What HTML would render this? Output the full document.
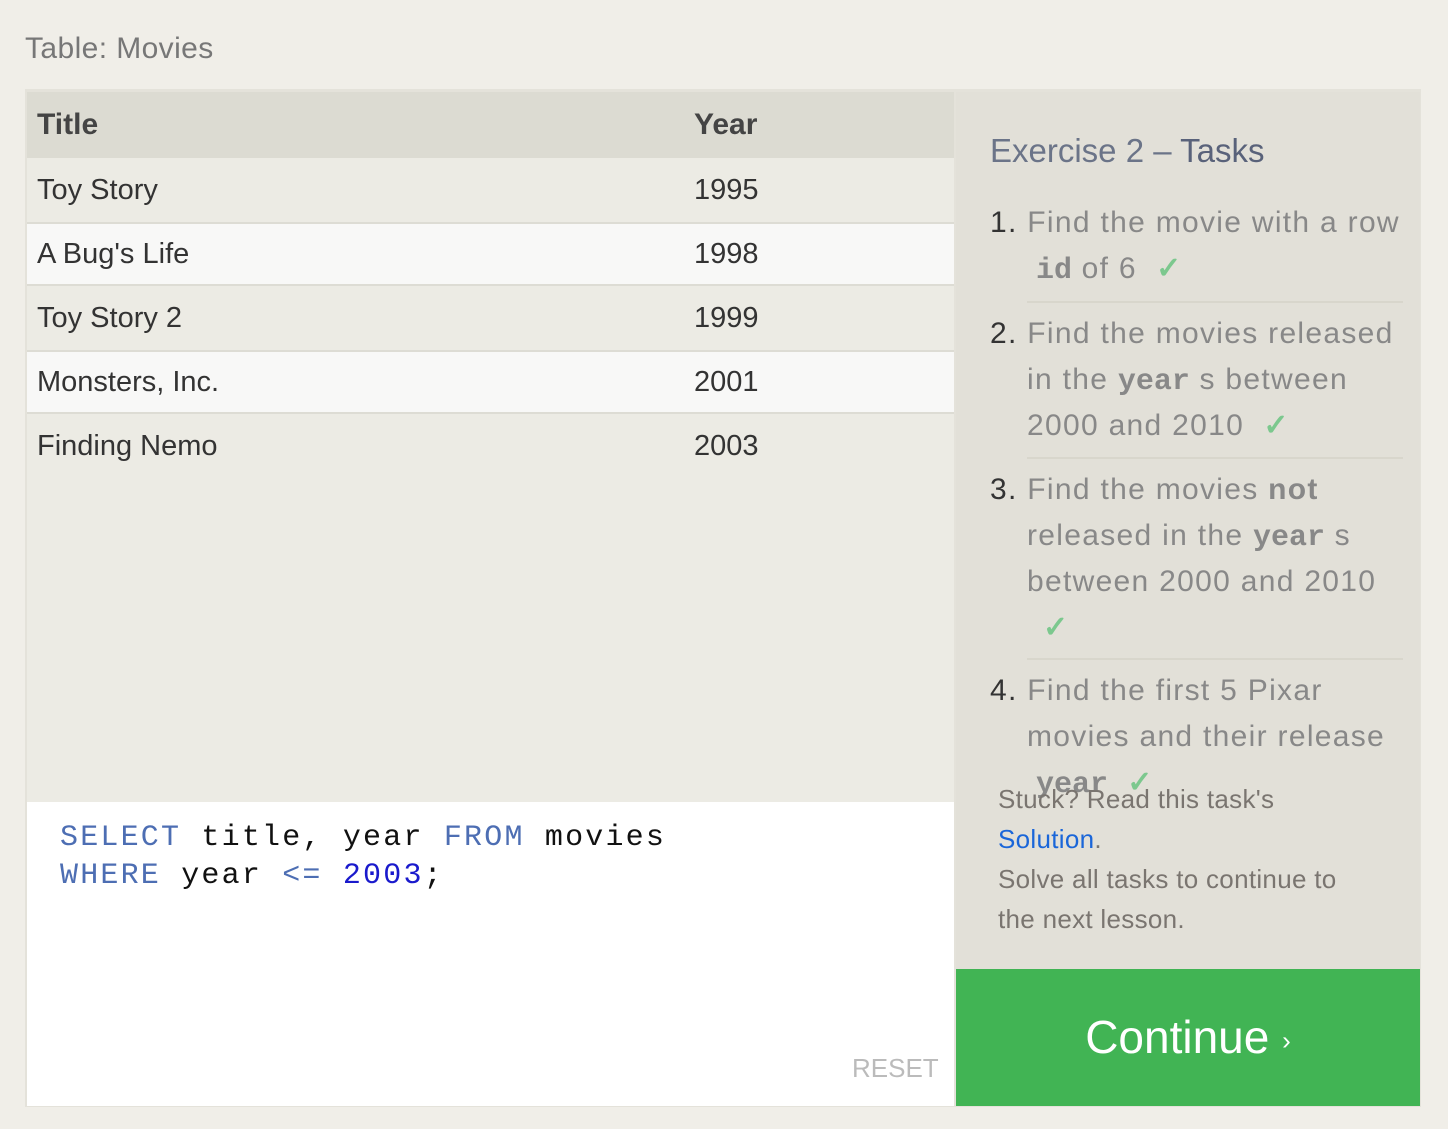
<!DOCTYPE html>
<html><head><meta charset="utf-8"><style>
body{margin:0;width:1448px;height:1129px;background:#f0eee8;font-family:"Liberation Sans",sans-serif;position:relative;overflow:hidden}
.a{position:absolute;white-space:nowrap}
.t{font-size:29px;color:#333;line-height:64px}
.k{font-size:30px;color:#888;line-height:46px;letter-spacing:1.3px}
.n{color:#333}
.m{font-family:"Liberation Mono",monospace;font-weight:bold;color:#888;letter-spacing:0}
.c{color:#7cc88e;font-weight:bold}
.code{font-family:"Liberation Mono",monospace;font-size:30px;line-height:38px;color:#111;letter-spacing:2.2px}
.kw{color:#4d6eb3}
.num{color:#1a1acc}
.s{font-size:26px;color:#7a7570;line-height:40px;letter-spacing:0.3px}
.sep{position:absolute;left:1027px;width:376px;height:2px;background:#d8d6cc}
</style></head><body>
<div class="a" style="left:25px;top:32px;font-size:30px;color:#777;letter-spacing:0.4px">Table: Movies</div>
<div class="a" style="left:25px;top:89px;width:1396px;height:1018px;background:#e4e2da"></div>
<div class="a" style="left:27px;top:92px;width:927px;height:710px;background:#ecebe4"></div>
<div class="a" style="left:27px;top:92px;width:927px;height:66px;background:#dcdbd2"></div>
<div class="a" style="left:27px;top:222px;width:927px;height:64px;background:#f8f8f7;border-top:2px solid #dddcd4;border-bottom:2px solid #dddcd4;box-sizing:border-box"></div>
<div class="a" style="left:27px;top:350px;width:927px;height:64px;background:#f8f8f7;border-top:2px solid #dddcd4;border-bottom:2px solid #dddcd4;box-sizing:border-box"></div>
<div class="a t" style="left:37px;top:93px;font-weight:bold;font-size:30px;color:#444">Title</div>
<div class="a t" style="left:694px;top:93px;font-weight:bold;font-size:30px;color:#444">Year</div>
<div class="a t" style="left:37px;top:158px">Toy Story</div><div class="a t" style="left:694px;top:158px">1995</div>
<div class="a t" style="left:37px;top:222px">A Bug's Life</div><div class="a t" style="left:694px;top:222px">1998</div>
<div class="a t" style="left:37px;top:286px">Toy Story 2</div><div class="a t" style="left:694px;top:286px">1999</div>
<div class="a t" style="left:37px;top:350px">Monsters, Inc.</div><div class="a t" style="left:694px;top:350px">2001</div>
<div class="a t" style="left:37px;top:414px">Finding Nemo</div><div class="a t" style="left:694px;top:414px">2003</div>
<div class="a" style="left:27px;top:802px;width:927px;height:304px;background:#fff"></div>
<div class="a code" style="left:60px;top:819px"><span class="kw">SELECT</span> title, year <span class="kw">FROM</span> movies<br><span class="kw">WHERE</span> year <span class="kw">&lt;=</span> <span class="num">2003</span>;</div>
<div class="a" style="left:852px;top:1053px;font-size:26px;color:#bbb">RESET</div>
<div class="a" style="left:956px;top:92px;width:464px;height:877px;background:#e2e0d8"></div>
<div class="a" style="left:990px;top:132px;font-size:33px;color:#6b7488">Exercise 2 – <span style="color:#59627a">Tasks</span></div>
<div class="a k" style="left:990px;top:200px"><span class="n">1.</span> Find the movie with a row</div>
<div class="a k" style="left:1036px;top:246px"><span class="m">id</span> of 6 &nbsp;<span class="c">✓</span></div>
<div class="sep" style="top:301px"></div>
<div class="a k" style="left:990px;top:311px"><span class="n">2.</span> Find the movies released</div>
<div class="a k" style="left:1027px;top:357px">in the <span class="m">year</span> s between</div>
<div class="a k" style="left:1027px;top:403px">2000 and 2010 &nbsp;<span class="c">✓</span></div>
<div class="sep" style="top:457px"></div>
<div class="a k" style="left:990px;top:467px"><span class="n">3.</span> Find the movies <b>not</b></div>
<div class="a k" style="left:1027px;top:513px">released in the <span class="m">year</span> s</div>
<div class="a k" style="left:1027px;top:559px">between 2000 and 2010</div>
<div class="a k" style="left:1043px;top:605px"><span class="c">✓</span></div>
<div class="sep" style="top:658px"></div>
<div class="a k" style="left:990px;top:668px"><span class="n">4.</span> Find the first 5 Pixar</div>
<div class="a k" style="left:1027px;top:714px">movies and their release</div>
<div class="a k" style="left:1036px;top:760px"><span class="m">year</span> &nbsp;<span class="c">✓</span></div>
<div class="a s" style="left:998px;top:779px">Stuck? Read this task's<br><span style="color:#1a66d9">Solution</span>.<br>Solve all tasks to continue to<br>the next lesson.</div>
<div class="a" style="left:956px;top:969px;width:464px;height:137px;background:#41b454;color:#fff;font-size:46px;line-height:137px;text-align:center">Continue <span style="font-size:26px;vertical-align:middle">›</span></div>
</body></html>
